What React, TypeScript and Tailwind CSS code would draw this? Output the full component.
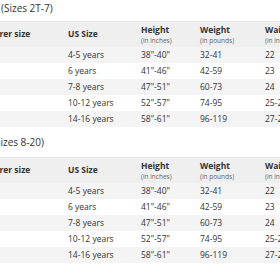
import React from "react";

const rows = [
  ["", "4-5 years", "38\"-40\"", "32-41", "22"],
  ["", "6 years", "41\"-46\"", "42-59", "23"],
  ["", "7-8 years", "47\"-51\"", "60-73", "24"],
  ["", "10-12 years", "52\"-57\"", "74-95", "25-26"],
  ["", "14-16 years", "58\"-61\"", "96-119", "27-28"],
];

function Table() {
  return (
    <div className="flex flex-col w-[360px]">
      <div className="flex h-[26px] items-center bg-[#efefef] border-t border-[#e6e6e6] text-[8.5px] font-bold text-[#333]">
        <div className="w-[68px] shrink-0 overflow-hidden whitespace-nowrap">
          <span className="ml-[-47px] inline-block">Manufacturer size</span>
        </div>
        <div className="w-[73px] shrink-0">US Size</div>
        <div className="w-[59px] shrink-0 flex flex-col leading-[11px] whitespace-nowrap">
          <span>Height</span>
          <span className="font-normal text-[6.5px] text-[#666]">(in inches)</span>
        </div>
        <div className="w-[65px] shrink-0 flex flex-col leading-[11px] whitespace-nowrap">
          <span>Weight</span>
          <span className="font-normal text-[6.5px] text-[#666]">(in pounds)</span>
        </div>
        <div className="w-[80px] shrink-0 flex flex-col leading-[11px] whitespace-nowrap">
          <span>Waist</span>
          <span className="font-normal text-[6.5px] text-[#666]">(in inches)</span>
        </div>
      </div>
      {rows.map((r, i) => (
        <div
          key={i}
          className={
            "flex h-[16px] items-center text-[8.5px] text-[#333] " +
            (i % 2 === 0 ? "bg-[#f4f4f4]" : "bg-white")
          }
        >
          <div className="w-[68px] shrink-0"></div>
          <div className="w-[73px] shrink-0 whitespace-nowrap">{r[1]}</div>
          <div className="w-[59px] shrink-0 whitespace-nowrap">{r[2]}</div>
          <div className="w-[65px] shrink-0 whitespace-nowrap">{r[3]}</div>
          <div className="w-[80px] shrink-0 whitespace-nowrap">{r[4]}</div>
        </div>
      ))}
    </div>
  );
}

export default function App() {
  return (
    <div
      className="w-[280px] h-[280px] overflow-hidden bg-white"
      style={{ fontFamily: '"Open Sans", sans-serif' }}
    >
      <div className="h-[21px] pt-[1px] flex items-start pl-[1px] text-[10px] text-[#333] whitespace-nowrap">
        (Sizes 2T-7)
      </div>
      <Table />
      <div className="h-[30px] flex items-center text-[10px] text-[#333] whitespace-nowrap overflow-hidden">
        <span className="ml-[-8px]">(Sizes 8-20)</span>
      </div>
      <Table />
    </div>
  );
}
